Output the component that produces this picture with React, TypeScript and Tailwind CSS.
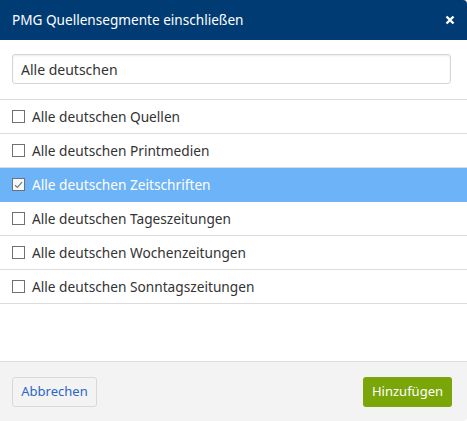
import { useState } from "react";

const SEGMENTS = [
  "Alle deutschen Quellen",
  "Alle deutschen Printmedien",
  "Alle deutschen Zeitschriften",
  "Alle deutschen Tageszeitungen",
  "Alle deutschen Wochenzeitungen",
  "Alle deutschen Sonntagszeitungen",
];

function Checkbox({ checked }: { checked: boolean }) {
  return (
    <span
      className={`w-[13px] h-[13px] border border-[#707070] flex items-center justify-center shrink-0 ${
        checked ? "bg-[#f4f8fc]" : "bg-white"
      }`}
    >
      {checked && (
        <svg width="9" height="8" viewBox="0 0 9 8" fill="none">
          <path d="M1 4.2 L3.4 6.5 L8 1.2" stroke="#7a7a7a" strokeWidth="1.2" />
        </svg>
      )}
    </span>
  );
}

export default function App() {
  const [query, setQuery] = useState("Alle deutschen");
  const [selected, setSelected] = useState(2);

  return (
    <div className="w-[467px] h-[421px] bg-white flex flex-col font-['Noto_Sans',sans-serif] text-[13.7px] text-[#333]">
      {/* Header */}
      <div className="h-[40px] bg-[#003c73] rounded-tr-[4px] flex items-center justify-between pl-[12px] pr-[12px] shrink-0">
        <span className="text-white text-[13.6px]">PMG Quellensegmente einschließen</span>
        <svg width="10" height="10" viewBox="0 0 10 10">
          <path d="M1.5 1.5 L8.5 8.5 M8.5 1.5 L1.5 8.5" stroke="white" strokeWidth="2.4" />
        </svg>
      </div>

      {/* Search */}
      <div className="pl-[12px] pr-[16px] pt-[14px] pb-[15px] border-b border-[#dcdcdc]">
        <input
          value={query}
          onChange={(e) => setQuery(e.target.value)}
          className="w-full h-[30px] border border-[#d6d6d6] rounded-[3px] px-[8px] text-[14px] text-[#333] outline-none shadow-[inset_0_1px_2px_rgba(0,0,0,0.08)]"
        />
      </div>

      {/* List */}
      <div className="flex-1">
        {SEGMENTS.map((label, i) => (
          <div
            key={label}
            onClick={() => setSelected(i)}
            className={`h-[34px] flex items-center gap-[7px] pl-[12px] border-b cursor-pointer ${
              i === selected
                ? "bg-[#6db3f8] text-white border-[#6db3f8]"
                : "border-[#dcdcdc]"
            }`}
          >
            <Checkbox checked={i === selected} />
            <span className="pt-[1px]">{label}</span>
          </div>
        ))}
      </div>

      {/* Footer */}
      <div className="h-[60px] bg-[#f3f3f3] border-t border-[#dcdcdc] rounded-br-[4px] flex items-center justify-between pl-[12px] pr-[15px] shrink-0">
        <button className="h-[30px] w-[85px] border border-[#d8d8d8] rounded-[3px] bg-[#f3f3f3] text-[#2a66c9] text-[13px]">
          Abbrechen
        </button>
        <button className="h-[30px] w-[89px] rounded-[3px] bg-[#7aa60a] text-white text-[13px]">
          Hinzufügen
        </button>
      </div>
    </div>
  );
}
